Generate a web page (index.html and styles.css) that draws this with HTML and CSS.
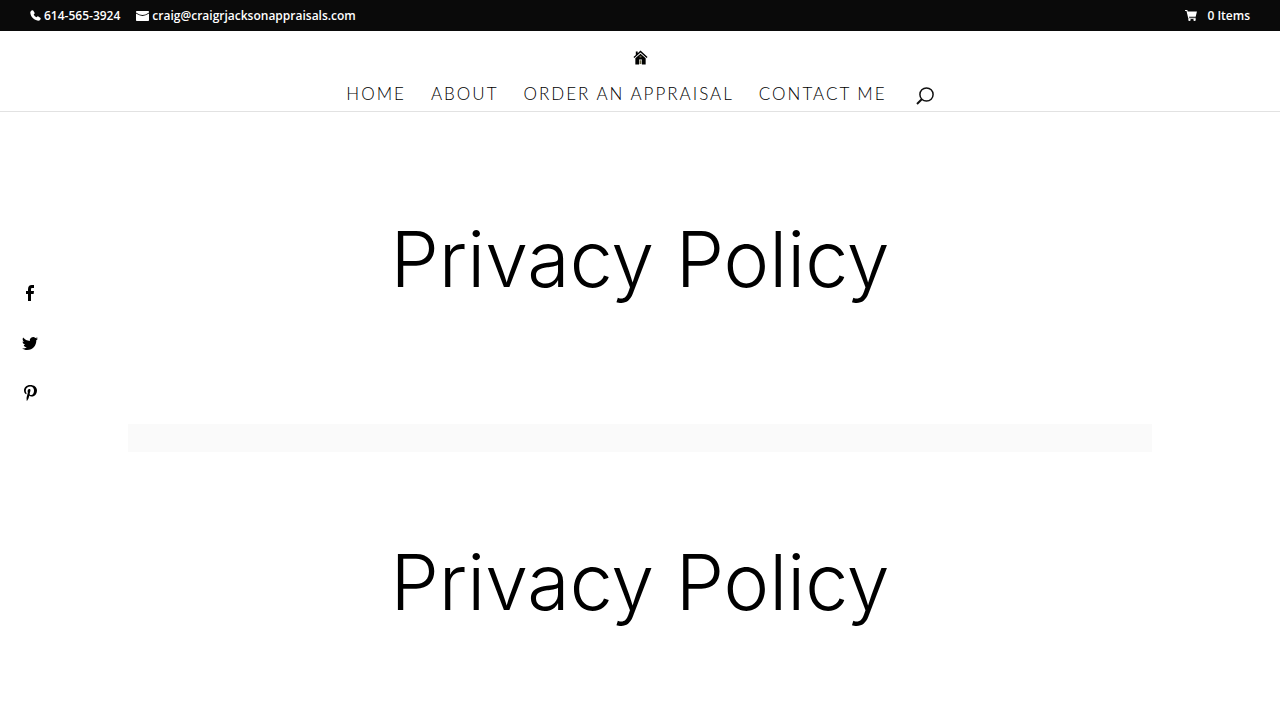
FILE: index.html
```html
<!DOCTYPE html>
<html lang="en">
<head>
  <meta charset="UTF-8">
  <meta name="viewport" content="width=device-width, initial-scale=1">
  <title>Privacy Policy</title>
  <link rel="stylesheet" href="styles.css">
</head>
<body>

  <div class="top-bar">
    <div class="contact-info">
      <a href="tel:6145653924">
        <svg class="icon-phone" viewBox="0 0 12 12"><path d="M2.600.3C1.200.6.2 1.800.3 3.100.8 7.600 4.400 11.300 8.900 11.700c1.300.1 2.500-.9 2.800-2.200.1-.5-.1-.9-.5-1.100L9.100 7c-.4-.2-.8-.1-1.100.1l-.9.9C5.700 7.300 4.700 6.300 4 4.900l.9-.9c.2-.3.3-.7.1-1.100L3.700.8C3.500.4 3 .2 2.600.3z"/></svg>
        <span>614-565-3924</span>
      </a>
      <a href="mailto:craig@craigrjacksonappraisals.com">
        <svg class="icon-mail" viewBox="0 0 13 10"><path d="M.8 0h11.400q.8 0 .8.800v.7Q9.500 4 6.500 4T0 1.500V.8Q0 0 .8 0zM0 2.600Q3.500 5 6.500 5T13 2.600v6.600q0 .8-.8.800H.8Q0 10 0 9.200z"/></svg>
        <span>craig@craigrjacksonappraisals.com</span>
      </a>
    </div>
    <a class="cart" href="#">
      <svg class="icon-cart" viewBox="0 0 13 12"><path d="M0 0h2.500l.4 1.500H13L11.600 7.400H4.300l.3 1h7v1.200H3.600L1.600 1.200H0z"/><circle cx="4.800" cy="10.700" r="1.300"/><circle cx="10.400" cy="10.700" r="1.300"/></svg>
      <span>0 Items</span>
    </a>
  </div>

  <header class="main-header">
    <a class="logo" href="#" aria-label="Home page">
      <svg viewBox="0 0 16 16"><path d="M8 .5l7.500 7-1 1L8 2.600 1.500 8.500l-1-1L3 5.200V1.500h2v1.900z"/><path d="M2.500 8.800L8 3.900l5.500 4.900V15.500h-4V10h-3v5.500h-4z"/><path class="logo-door" d="M7 6h2v2H7zM7 11h2v4H7z"/></svg>
    </a>
    <nav class="menu">
      <a href="#">HOME</a>
      <a href="#">ABOUT</a>
      <a href="#">ORDER AN APPRAISAL</a>
      <a href="#">CONTACT ME</a>
      <button class="search" type="button" aria-label="Search">
        <svg viewBox="0 0 18 18"><circle cx="10.500" cy="7.500" r="6.600"/><path class="handle" d="M6 12L1 17"/></svg>
      </button>
    </nav>
  </header>

  <main>
    <h1 class="title">Privacy Policy</h1>
    <div class="band"></div>
    <h2 class="title">Privacy Policy</h2>
  </main>

  <!-- share links stay over the page while it scrolls -->
  <aside class="share">
    <a href="#" aria-label="Facebook">
      <svg viewBox="0 0 16 16"><path d="M6 16V9H4V6h2V4.200C6 1.500 7.400 0 9.800 0H12v3h-1.500C9.400 3 9 3.400 9 4.300V6h3l-.4 3H9v7z"/></svg>
    </a>
    <a href="#" aria-label="Twitter">
      <svg viewBox="0 0 16 16"><path d="M16 3.500c-.6.300-1.200.4-1.900.5.7-.4 1.200-1 1.400-1.800-.6.400-1.300.6-2.100.8A3.300 3.300 0 0 0 7.800 6C5.100 5.900 2.700 4.600 1.100 2.600c-.9 1.500-.4 3.400 1 4.400-.5 0-1-.2-1.500-.4 0 1.600 1.100 2.900 2.600 3.200-.5.200-1 .2-1.500.1.400 1.300 1.600 2.300 3.100 2.300A6.600 6.600 0 0 1 0 13.500c1.500.9 3.200 1.500 5 1.500 6.100 0 9.500-5.100 9.300-9.800.7-.4 1.200-1 1.700-1.700z"/></svg>
    </a>
    <a href="#" aria-label="Pinterest">
      <svg viewBox="0 0 16 16"><path d="M8.300 0C4.200 0 2 2.700 2 5.500c0 1.400.8 3.100 2 3.700.4.200.4 0 .6-.9 0-.2 0-.3-.1-.4C2.800 5.800 4.200 1.600 8.100 1.600c5.600 0 4.600 8.500 1 8.500-.9 0-1.600-.8-1.400-1.700.3-1.100.8-2.300.8-3.200 0-2-2.900-1.700-2.900 1 0 .8.300 1.400.3 1.400L4.700 12c-.3 1.200 0 3.100.1 3.900h.2c.5-.7 1.400-1.900 1.700-3.100l.7-2.400c.4.700 1.400 1.200 2.400 1.200 3.100 0 5.200-2.800 5.200-6.300C14.900 2.200 12.200 0 8.300 0z"/></svg>
    </a>
  </aside>

</body>
</html>
```
FILE: styles.css
```css
* {
  box-sizing: border-box;
}

body {
  margin: 0;
  background-color: #fff;
  color: #000;
  font-family: Lato, 'Open Sans', sans-serif;
}

a {
  color: inherit;
  text-decoration: none;
}

svg {
  display: block;
  fill: currentColor;
}

.top-bar {
  display: flex;
  justify-content: space-between;
  padding: 8px 30px;
  background-color: #0a0a0a;
  color: #fff;
  font-family: 'Open Sans', sans-serif;
  font-size: 12px;
  font-weight: 600;
  line-height: 15px;
}

.contact-info {
  display: flex;
  gap: 16px;
}

.top-bar a {
  display: flex;
  align-items: center;
  gap: 3px;
}

.top-bar .cart {
  gap: 10px;
}

.icon-phone {
  width: 11px;
  height: 11px;
}

.icon-mail {
  width: 13px;
  height: 10px;
}

.icon-cart {
  width: 12px;
  height: 11px;
}

.main-header {
  display: flex;
  flex-direction: column;
  align-items: center;
  gap: 19px;
  padding-top: 19px;
  border-bottom: 1px solid #e2e2e2;
}

.logo svg {
  width: 15px;
  height: 15px;
}

.logo-door {
  fill: #6b6748;
}

.menu {
  display: flex;
  gap: 25px;
  font-size: 17px;
  font-weight: 300;
  line-height: 20px;
  letter-spacing: 2px;
  padding-bottom: 6px;
}

.search {
  margin-left: 4px;
  padding: 3px 0 0;
  border: 0;
  background: none;
  color: #111;
  cursor: pointer;
}

.search svg {
  width: 18px;
  height: 18px;
  fill: none;
  stroke: currentColor;
  stroke-width: 1.5;
}

.search .handle {
  stroke-width: 2;
}

main {
  width: 80%;
  margin: 0 auto;
  padding-top: 17px;
}

.title {
  margin: 0;
  padding: 82px 0 117px;
  font-family: Inter, sans-serif;
  font-size: 77px;
  font-weight: 300;
  line-height: 96px;
  text-align: center;
}

.band {
  height: 28px;
  background-color: #fafafa;
}

.share {
  position: fixed;
  left: 22px;
  top: 285px;
  display: flex;
  flex-direction: column;
  gap: 34px;
}

.share svg {
  width: 16px;
  height: 16px;
}
```
